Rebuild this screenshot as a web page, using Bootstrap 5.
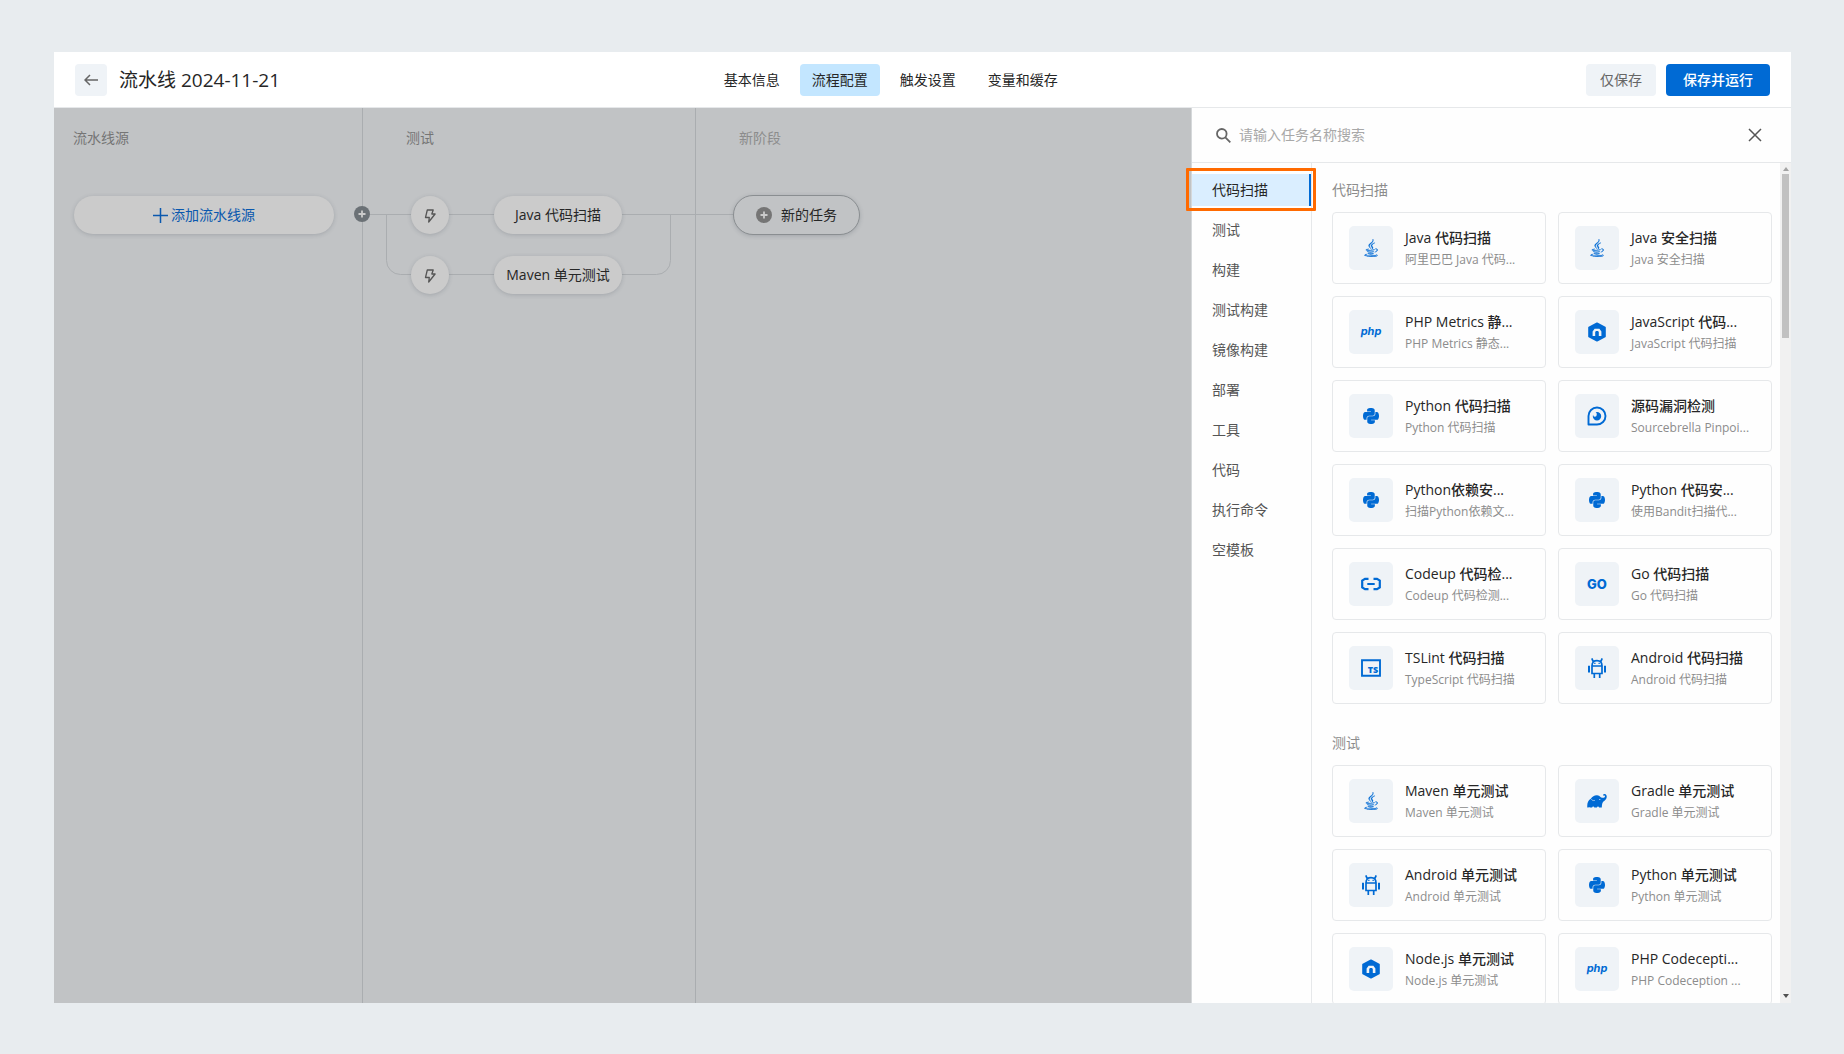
<!DOCTYPE html>
<html lang="zh-CN">
<head>
<meta charset="utf-8">
<meta name="viewport" content="width=device-width, initial-scale=1">
<title>流水线 2024-11-21</title>
<link href="https://cdn.jsdelivr.net/npm/bootstrap@5.3.0/dist/css/bootstrap.min.css" rel="stylesheet">
<style>
  :root { --brand: #006ad4; --line: #e6e8ea; --soft: #eff3f7; }
  body { background: #e8ecef; color: #262626; font: 14px/20px "Open Sans", "Noto Sans CJK SC", sans-serif; }
  .page { height: 100vh; padding: 52px 53px 51px 54px; }
  .topbar { height: 56px; padding: 0 21px; border-bottom: 1px solid var(--line); }
  .topbar-start { flex: 10 1 0; gap: 12px; }
  .topbar-end { flex: 11 1 0; gap: 10px; }
  .pipeline-title { font-size: 19px; line-height: 28px; font-weight: 400; }
  .btn { --bs-btn-font-size: 14px; --bs-btn-line-height: 20px; --bs-btn-border-radius: 4px; height: 32px; }
  .btn-soft { --bs-btn-bg: var(--soft); --bs-btn-color: #666; --bs-btn-hover-bg: #e3e9ef; --bs-btn-border-width: 0; --bs-btn-padding-x: 14px; }
  .btn-brand { --bs-btn-bg: var(--brand); --bs-btn-color: #fff; --bs-btn-hover-bg: #005bb8; --bs-btn-hover-color: #fff; --bs-btn-border-width: 0; --bs-btn-padding-x: 17px; --bs-btn-font-weight: 500; }
  .btn-back { width: 32px; }
  .tabs { --bs-nav-pills-border-radius: 4px; --bs-nav-pills-link-active-bg: #c3e6ff; --bs-nav-pills-link-active-color: #262626; --bs-nav-link-color: #262626; --bs-nav-link-padding-x: 12px; --bs-nav-link-padding-y: 6px; gap: 8px; }

  .flow { background: #c1c3c5; }
  .flow-links { position: absolute; left: 0; top: 0; width: 700px; height: 300px; fill: none; stroke: #aaadb0; }
  .stage { position: relative; width: 333px; padding-top: 20px; border-right: 1px solid #aaadb0; }
  .stage-source { width: 309px; }
  .stage-new { border-right: 0; }
  .stage-name { margin: 0 0 47px 43px; color: #757575; }
  .stage-source .stage-name { margin-left: 19px; }
  .stage-new .stage-name { color: #8c8c8c; }
  .node-row { height: 40px; margin-bottom: 20px; }
  .stage-source .node-row { padding: 0 28px 0 20px; }
  .stage-test .node-row { padding-left: 48px; gap: 45px; }
  .stage-new .node-row { padding-left: 37px; }
  .node { height: 38px; border: 0; border-radius: 20px; background: #cbcbcb; color: #262626; box-shadow: 0 1px 4px rgba(60, 70, 80, .22); }
  .node-wide { width: 100%; color: #0a58ae; gap: 3px; }
  .node-round { width: 38px; color: #555; padding: 0; }
  .node-task { width: 128px; padding: 0; white-space: nowrap; }
  .node-new { width: 127px; height: 40px; background: #c1c3c5; border: 1px solid #8a8e91; gap: 9px; }
  .stage-add { position: absolute; right: -8px; top: 98px; width: 16px; height: 16px; padding: 0; border: 0; background: none; color: #6b7176; }

  .drawer { width: 600px; background: #fefefe; border-left: 1px solid #d5d8da; }
  .search-bar { height: 55px; padding: 0 29px 0 24px; border-bottom: 1px solid var(--line); color: #666; }
  .search-bar input { border: 0; background: none; outline: 0; color: #262626; }
  .search-bar input::placeholder { color: #a8a8a8; opacity: 1; }
  .btn-plain { border: 0; background: none; padding: 0; color: #555; }
  .drawer-body { min-height: 0; }
  .category { width: 120px; padding-top: 11px; border-right: 1px solid var(--line); gap: 8px; }
  .category a { position: relative; padding: 6px 20px; color: #555; text-decoration: none; }
  .category a.active { background: #daeeff; color: #262626; border-right: 2px solid var(--brand); }
  .callout { position: absolute; left: -6px; top: -6px; right: -7px; bottom: -5px; border: 3px solid #ff6a00; border-radius: 1px; pointer-events: none; }
  .task-area { padding: 17px 8px 0 20px; }
  .task-heading { font-size: 14px; line-height: 20px; font-weight: 400; color: #8c8c8c; margin: 0 0 12px; }
  .task-grid { display: grid; grid-template-columns: 1fr 1fr; gap: 12px; margin-bottom: 29px; }
  .task-item { height: 72px; padding: 0 16px; gap: 12px; border: 1px solid var(--line); border-radius: 4px; color: #262626; text-decoration: none; white-space: nowrap; }
  .task-icon { width: 44px; height: 44px; border-radius: 5px; background: var(--soft); color: var(--brand); }
  .task-text { padding-top: 2px; }
  .task-name { font-weight: 500; line-height: 22px; }
  .task-desc { font-size: 12px; line-height: 22px; color: #8c8c8c; }
  .scroll-track { width: 11px; padding: 4px 2px 5px; background: #f1f1f1; }
  .scroll-thumb { width: 7px; height: 164px; margin-top: 3px; background: #c1c1c1; }
</style>
<script src="https://cdn.jsdelivr.net/npm/bootstrap@5.3.0/dist/js/bootstrap.bundle.min.js"></script>
</head>
<body>
<svg class="d-none" aria-hidden="true">
  <symbol id="i-java" viewBox="0 0 384 512"><path fill="currentColor" stroke="currentColor" stroke-width="10" d="M277.74 312.9c9.8-6.7 23.4-12.5 23.4-12.5s-38.7 7-77.2 10.2c-47.1 3.9-97.7 4.7-123.1 1.3-60.1-8 33-30.1 33-30.1s-36.1-2.4-80.6 19c-52.5 25.4 130 37 224.5 12.1zm-85.4-32.1c-19-42.7-83.1-80.2 0-145.8C296 53.2 242.84 0 242.84 0c21.5 84.5-75.6 110.1-110.7 162.6-23.9 35.9 11.7 74.4 60.2 118.2zm114.6-176.2c.1 0-175.2 43.8-91.5 140.2 24.7 28.4-6.5 54-6.5 54s62.7-32.4 33.9-72.9c-26.9-37.8-47.5-56.6 64.1-121.3zm-6.1 270.5a12.19 12.19 0 0 1-2 2.6c128.3-33.7 81.1-118.9 19.8-97.3a17.33 17.33 0 0 0-8.2 6.3 70.45 70.45 0 0 1 11-3c31-6.5 75.5 41.5-20.6 91.4zM348 437.4s14.5 11.9-15.9 21.2c-57.9 17.5-240.8 22.8-291.6.7-18.3-7.9 16-19 26.8-21.3 11.2-2.4 17.7-2 17.7-2-20.3-14.3-131.3 28.1-56.4 40.2C232.84 509.4 401 461.3 348 437.4zM124.44 396c-78.7 22 47.9 67.4 148.1 24.5a185.89 185.89 0 0 1-28.2-13.8c-44.7 8.5-65.4 9.1-106 4.5-33.5-3.8-13.9-15.2-13.9-15.2zm179.8 97.2c-78.7 14.8-175.8 13.1-233.3 3.6 0-.1 11.8 9.7 72.4 13.6 92.2 5.9 233.8-3.3 237.1-46.9 0 0-6.4 16.5-76.2 29.7zM260.64 353c-59.2 11.4-93.5 11.1-136.8 6.6-33.5-3.5-11.6-19.7-11.6-19.7-86.8 28.8 48.2 61.4 169.5 25.9a60.37 60.37 0 0 1-21.1-12.8z"/></symbol>
  <symbol id="i-python" viewBox="0 32 448 448"><path fill="currentColor" d="M439.8 200.5c-7.7-30.9-22.3-54.2-53.4-54.2h-40.1v47.4c0 36.8-31.2 67.8-66.8 67.8H172.7c-29.2 0-53.4 25-53.4 54.3v101.8c0 29 25.2 46 53.4 54.3 33.8 9.9 66.3 11.7 106.8 0 26.9-7.8 53.4-23.5 53.4-54.3v-40.7H226.2v-13.6h160.2c31.1 0 42.6-21.7 53.4-54.2 11.2-33.5 10.7-65.7 0-108.6zM167.8 248.1h106.8c29.7 0 53.4-24.5 53.4-54.3V91.9c0-29-24.4-50.7-53.4-55.6-35.8-5.9-74.7-5.6-106.8.1-45.2 8-53.4 24.7-53.4 55.6v40.7h106.9v13.6h-147c-31.1 0-58.3 18.7-66.8 54.2-9.8 40.7-10.2 66.1 0 108.6 7.6 31.6 25.7 54.2 56.8 54.2H101v-48.8c0-35.3 30.5-66.4 66.8-66.4z"/></symbol>
  <symbol id="i-php" viewBox="0 0 24 20"><text x="12" y="13" text-anchor="middle" font-family="Inter, Open Sans, sans-serif" font-size="11" font-weight="700" font-style="italic" fill="currentColor">php</text></symbol>
  <symbol id="i-go" viewBox="0 0 24 20"><text x="12" y="15" text-anchor="middle" font-family="Inter, Open Sans, sans-serif" font-size="13" font-weight="800" fill="currentColor">GO</text></symbol>
  <symbol id="i-node" viewBox="0 0 20 20"><path fill="currentColor" stroke="currentColor" stroke-width="1.600" stroke-linejoin="round" d="M10 1.300l8 4.200v9l-8 4.200-8-4.200v-9z"/><path fill="#eff3f7" d="M5.600 14V9.600L7.600 6.800h4.800l2 2.800V14h-2.600v-4l-.8-.9H9l-.8.9v4z"/></symbol>
  <symbol id="i-eye" viewBox="0 0 20 20"><path fill="none" stroke="currentColor" stroke-width="1.900" stroke-linejoin="round" d="M1.500 18.500V10A8.500 8.500 0 1 1 10 18.500z"/><path fill="currentColor" d="M10 6a4.200 4.200 0 1 1-4.200 4.200 4.200 4.200 0 0 1 .3-1.400 1.800 1.800 0 0 0 3.600.2 2 2 0 0 0-1-2.500A4 4 0 0 1 10 6z"/></symbol>
  <symbol id="i-codeup" viewBox="0 0 20 14"><path fill="none" stroke="currentColor" stroke-width="2.200" d="M7.500 1.800H4l-2.800 1.700v7L4 12.200h3.500M12.500 1.800H16l2.800 1.700v7L16 12.200h-3.500M6.300 7h7.400"/></symbol>
  <symbol id="i-ts" viewBox="0 0 20 18"><path fill="none" stroke="currentColor" stroke-width="1.900" d="M1 1.200h18v15.600H1z"/><text x="12" y="13.500" text-anchor="middle" font-family="Open Sans, sans-serif" font-size="9" font-weight="800" fill="currentColor">TS</text></symbol>
  <symbol id="i-android" viewBox="0 0 20 20"><g fill="none" stroke="currentColor" stroke-width="1.700"><path d="M5 8v7.500h10V8zM5 8c0-3.800 2-5.300 5-5.300S15 4.200 15 8M6.300 3.800L4.800.4M13.700 3.800L15.200.4M7.300 15.500V20M12.700 15.500V20"/><path stroke-width="2" d="M2 7.800v6.800M18 7.800v6.800"/></g><path fill="currentColor" d="M7.200 4.800h1.300v1.300H7.200zM11.500 4.800h1.300v1.300h-1.300z"/></symbol>
  <symbol id="i-gradle" viewBox="0 0 20 14"><path fill="currentColor" d="M.3 13.600C0 9.500.8 6.300 3.800 4.700 5.600 2.300 8 .9 11 1.500c1.600.2 2.300 1.600 3.900 2.200 1.600.5 3-.4 3.100-1.500 0-.6-.5-.9-1-.6-.6.3-1.200-.4-.8-1 .9-.9 2.500-.6 3.200.7.9 2-.1 4.400-2.200 5.700-1.200.8-1.700 1.700-1.900 2.600-.2 1-.4 1.500-.5 4h-2.700c-.2-1.500-2-1.500-2.200 0H7.300c-.2-1.500-2-1.500-2.200 0H2.700c-.2-.8-1-.8-1.200 0z"/><path fill="none" stroke="#eff3f7" stroke-width=".6" d="M4.300 5.200c.8 1.300 2 1.600 3.600 1.200"/><circle cx="12.800" cy="5.500" r=".6" fill="#eff3f7"/></symbol>
  <symbol id="i-bolt" viewBox="0 0 12 14"><path fill="none" stroke="currentColor" stroke-width="1.300" stroke-linejoin="round" d="M3.300 1h5.900L7.800 5h3.300L4.700 13l.6-4.500H1.500z"/></symbol>
  <symbol id="i-plus-dot" viewBox="0 0 16 16"><circle cx="8" cy="8" r="8" fill="currentColor"/><path stroke="#cbcbcb" stroke-width="1.800" d="M4.500 8h7M8 4.500v7"/></symbol>
</svg>

<div class="page d-flex flex-column">
  <header class="topbar bg-white d-flex align-items-center flex-shrink-0">
    <div class="topbar-start d-flex align-items-center">
      <button class="btn btn-soft btn-back p-0 d-flex align-items-center justify-content-center" type="button" aria-label="返回">
        <svg width="14" height="12" viewBox="0 0 14 12" fill="none" stroke="currentColor" stroke-width="1.500"><path d="M14 6H1M6 1L1 6l5 5"/></svg>
      </button>
      <h1 class="pipeline-title m-0">流水线 2024-11-21</h1>
    </div>
    <nav class="tabs nav nav-pills flex-nowrap">
      <a class="nav-link" href="#">基本信息</a>
      <a class="nav-link active" href="#" aria-current="page">流程配置</a>
      <a class="nav-link" href="#">触发设置</a>
      <a class="nav-link" href="#">变量和缓存</a>
    </nav>
    <div class="topbar-end d-flex justify-content-end">
      <button class="btn btn-soft" type="button">仅保存</button>
      <button class="btn btn-brand" type="button">保存并运行</button>
    </div>
  </header>

  <div class="d-flex flex-grow-1 overflow-hidden">
    <main class="flow position-relative d-flex flex-grow-1 overflow-hidden">
      <svg class="flow-links" aria-hidden="true"><path d="M309 106.500H690M332.500 106.500v46a14 14 0 0 0 14 14H602.500a14 14 0 0 0 14-14v-46"/></svg>
      <section class="stage stage-source flex-shrink-0">
        <div class="stage-name">流水线源</div>
        <div class="node-row d-flex align-items-center">
          <button class="node node-wide d-flex align-items-center justify-content-center" type="button">
            <svg width="15" height="15" viewBox="0 0 15 15" stroke="currentColor" stroke-width="1.500"><path d="M0 7.500h15M7.500 0v15"/></svg>添加流水线源
          </button>
        </div>
        <button class="stage-add d-flex" type="button" aria-label="添加阶段"><svg width="16" height="16"><use href="#i-plus-dot"/></svg></button>
      </section>
      <section class="stage stage-test flex-shrink-0">
        <div class="stage-name">测试</div>
        <div class="node-row d-flex align-items-center">
          <button class="node node-round" type="button" aria-label="触发"><svg width="12" height="14"><use href="#i-bolt"/></svg></button>
          <button class="node node-task" type="button">Java 代码扫描</button>
        </div>
        <div class="node-row d-flex align-items-center">
          <button class="node node-round" type="button" aria-label="触发"><svg width="12" height="14"><use href="#i-bolt"/></svg></button>
          <button class="node node-task" type="button">Maven 单元测试</button>
        </div>
      </section>
      <section class="stage stage-new flex-shrink-0">
        <div class="stage-name">新阶段</div>
        <div class="node-row d-flex align-items-center">
          <button class="node node-new d-flex align-items-center justify-content-center" type="button"><svg width="16" height="16" color="#757575"><use href="#i-plus-dot"/></svg>新的任务</button>
        </div>
      </section>
    </main>

    <aside class="drawer position-relative d-flex flex-column flex-shrink-0">
      <div class="search-bar d-flex align-items-center flex-shrink-0">
        <label for="task-search" class="d-flex me-2"><svg width="15" height="15" viewBox="0 0 15 15" fill="none" stroke="currentColor" stroke-width="1.800" role="img" aria-label="搜索"><circle cx="5.800" cy="5.800" r="4.800"/><path d="M9.300 9.300l5 5"/></svg></label>
        <input id="task-search" class="flex-grow-1 p-0" type="text" placeholder="请输入任务名称搜索">
        <button class="btn-plain d-flex" type="button" aria-label="关闭"><svg width="14" height="14" viewBox="0 0 14 14" stroke="currentColor" stroke-width="1.500"><path d="M1 1l12 12M13 1L1 13"/></svg></button>
      </div>
      <div class="drawer-body d-flex flex-grow-1">
        <nav class="category d-flex flex-column flex-shrink-0">
          <a class="active" href="#">代码扫描<span class="callout"></span></a>
          <a href="#">测试</a>
          <a href="#">构建</a>
          <a href="#">测试构建</a>
          <a href="#">镜像构建</a>
          <a href="#">部署</a>
          <a href="#">工具</a>
          <a href="#">代码</a>
          <a href="#">执行命令</a>
          <a href="#">空模板</a>
        </nav>
        <div class="task-area flex-grow-1 overflow-hidden">
          <h2 class="task-heading">代码扫描</h2>
          <div class="task-grid">
            <a class="task-item d-flex align-items-center" href="#"><span class="task-icon d-flex align-items-center justify-content-center flex-shrink-0"><svg width="14" height="18"><use href="#i-java"/></svg></span><span class="task-text d-flex flex-column"><span class="task-name">Java 代码扫描</span><span class="task-desc">阿里巴巴 Java 代码...</span></span></a>
            <a class="task-item d-flex align-items-center" href="#"><span class="task-icon d-flex align-items-center justify-content-center flex-shrink-0"><svg width="14" height="18"><use href="#i-java"/></svg></span><span class="task-text d-flex flex-column"><span class="task-name">Java 安全扫描</span><span class="task-desc">Java 安全扫描</span></span></a>
            <a class="task-item d-flex align-items-center" href="#"><span class="task-icon d-flex align-items-center justify-content-center flex-shrink-0"><svg width="24" height="20"><use href="#i-php"/></svg></span><span class="task-text d-flex flex-column"><span class="task-name">PHP Metrics 静...</span><span class="task-desc">PHP Metrics 静态...</span></span></a>
            <a class="task-item d-flex align-items-center" href="#"><span class="task-icon d-flex align-items-center justify-content-center flex-shrink-0"><svg width="20" height="20"><use href="#i-node"/></svg></span><span class="task-text d-flex flex-column"><span class="task-name">JavaScript 代码...</span><span class="task-desc">JavaScript 代码扫描</span></span></a>
            <a class="task-item d-flex align-items-center" href="#"><span class="task-icon d-flex align-items-center justify-content-center flex-shrink-0"><svg width="16" height="16"><use href="#i-python"/></svg></span><span class="task-text d-flex flex-column"><span class="task-name">Python 代码扫描</span><span class="task-desc">Python 代码扫描</span></span></a>
            <a class="task-item d-flex align-items-center" href="#"><span class="task-icon d-flex align-items-center justify-content-center flex-shrink-0"><svg width="20" height="20"><use href="#i-eye"/></svg></span><span class="task-text d-flex flex-column"><span class="task-name">源码漏洞检测</span><span class="task-desc">Sourcebrella Pinpoi...</span></span></a>
            <a class="task-item d-flex align-items-center" href="#"><span class="task-icon d-flex align-items-center justify-content-center flex-shrink-0"><svg width="16" height="16"><use href="#i-python"/></svg></span><span class="task-text d-flex flex-column"><span class="task-name">Python依赖安...</span><span class="task-desc">扫描Python依赖文...</span></span></a>
            <a class="task-item d-flex align-items-center" href="#"><span class="task-icon d-flex align-items-center justify-content-center flex-shrink-0"><svg width="16" height="16"><use href="#i-python"/></svg></span><span class="task-text d-flex flex-column"><span class="task-name">Python 代码安...</span><span class="task-desc">使用Bandit扫描代...</span></span></a>
            <a class="task-item d-flex align-items-center" href="#"><span class="task-icon d-flex align-items-center justify-content-center flex-shrink-0"><svg width="20" height="14"><use href="#i-codeup"/></svg></span><span class="task-text d-flex flex-column"><span class="task-name">Codeup 代码检...</span><span class="task-desc">Codeup 代码检测...</span></span></a>
            <a class="task-item d-flex align-items-center" href="#"><span class="task-icon d-flex align-items-center justify-content-center flex-shrink-0"><svg width="24" height="20"><use href="#i-go"/></svg></span><span class="task-text d-flex flex-column"><span class="task-name">Go 代码扫描</span><span class="task-desc">Go 代码扫描</span></span></a>
            <a class="task-item d-flex align-items-center" href="#"><span class="task-icon d-flex align-items-center justify-content-center flex-shrink-0"><svg width="20" height="18"><use href="#i-ts"/></svg></span><span class="task-text d-flex flex-column"><span class="task-name">TSLint 代码扫描</span><span class="task-desc">TypeScript 代码扫描</span></span></a>
            <a class="task-item d-flex align-items-center" href="#"><span class="task-icon d-flex align-items-center justify-content-center flex-shrink-0"><svg width="20" height="20"><use href="#i-android"/></svg></span><span class="task-text d-flex flex-column"><span class="task-name">Android 代码扫描</span><span class="task-desc">Android 代码扫描</span></span></a>
          </div>
          <h2 class="task-heading">测试</h2>
          <div class="task-grid">
            <a class="task-item d-flex align-items-center" href="#"><span class="task-icon d-flex align-items-center justify-content-center flex-shrink-0"><svg width="14" height="18"><use href="#i-java"/></svg></span><span class="task-text d-flex flex-column"><span class="task-name">Maven 单元测试</span><span class="task-desc">Maven 单元测试</span></span></a>
            <a class="task-item d-flex align-items-center" href="#"><span class="task-icon d-flex align-items-center justify-content-center flex-shrink-0"><svg width="20" height="14"><use href="#i-gradle"/></svg></span><span class="task-text d-flex flex-column"><span class="task-name">Gradle 单元测试</span><span class="task-desc">Gradle 单元测试</span></span></a>
            <a class="task-item d-flex align-items-center" href="#"><span class="task-icon d-flex align-items-center justify-content-center flex-shrink-0"><svg width="20" height="20"><use href="#i-android"/></svg></span><span class="task-text d-flex flex-column"><span class="task-name">Android 单元测试</span><span class="task-desc">Android 单元测试</span></span></a>
            <a class="task-item d-flex align-items-center" href="#"><span class="task-icon d-flex align-items-center justify-content-center flex-shrink-0"><svg width="16" height="16"><use href="#i-python"/></svg></span><span class="task-text d-flex flex-column"><span class="task-name">Python 单元测试</span><span class="task-desc">Python 单元测试</span></span></a>
            <a class="task-item d-flex align-items-center" href="#"><span class="task-icon d-flex align-items-center justify-content-center flex-shrink-0"><svg width="20" height="20"><use href="#i-node"/></svg></span><span class="task-text d-flex flex-column"><span class="task-name">Node.js 单元测试</span><span class="task-desc">Node.js 单元测试</span></span></a>
            <a class="task-item d-flex align-items-center" href="#"><span class="task-icon d-flex align-items-center justify-content-center flex-shrink-0"><svg width="24" height="20"><use href="#i-php"/></svg></span><span class="task-text d-flex flex-column"><span class="task-name">PHP Codecepti...</span><span class="task-desc">PHP Codeception ...</span></span></a>
          </div>
        </div>
        <div class="scroll-track d-flex flex-column align-items-center flex-shrink-0" aria-hidden="true">
          <svg class="flex-shrink-0" width="6" height="4" viewBox="0 0 6 4"><path fill="#a3a3a3" d="M0 4l3-4 3 4z"/></svg>
          <div class="scroll-thumb flex-shrink-0"></div>
          <svg class="flex-shrink-0 mt-auto" width="6" height="4" viewBox="0 0 6 4"><path fill="#505050" d="M0 0h6L3 4z"/></svg>
        </div>
      </div>
    </aside>
  </div>
</div>
</body>
</html>
